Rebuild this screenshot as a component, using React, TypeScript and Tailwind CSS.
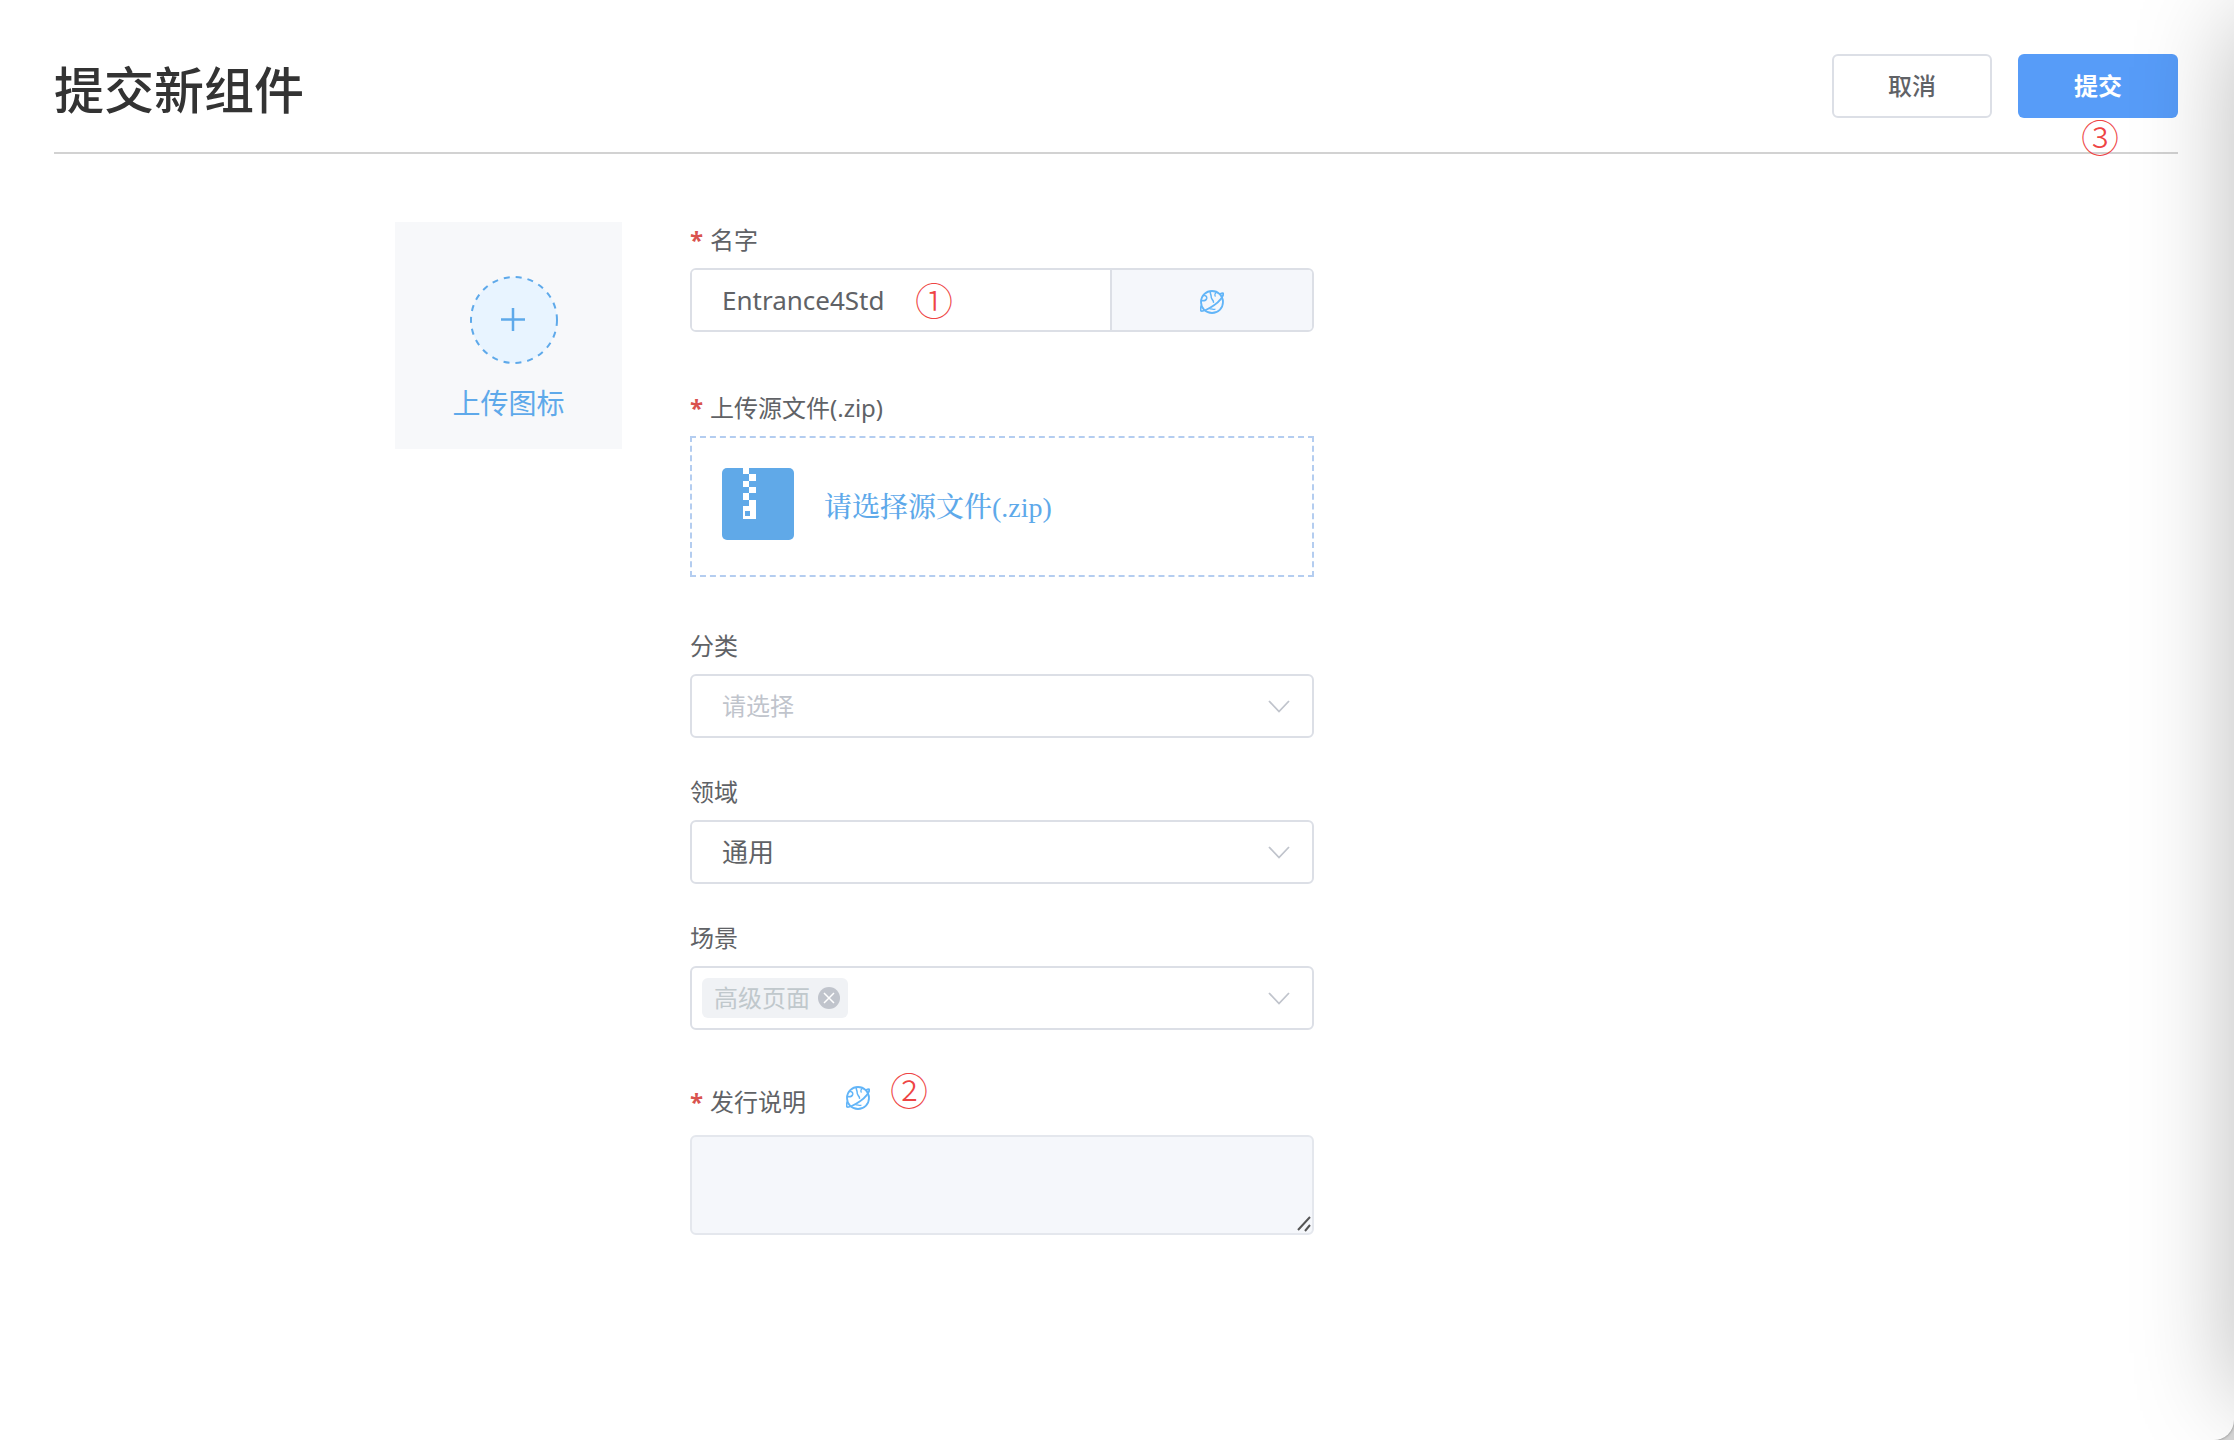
import { useState } from 'react';
import type { ReactNode } from 'react';

const labelClass = 'flex h-14 items-center gap-2 text-2xl text-[#606266]';

const selectClass =
  'h-16 w-full appearance-none rounded-md border-2 border-[#dcdfe6] bg-white px-[30px] outline-none';

const categories = ['基础组件', '业务组件'];
const domains = ['通用', '教育', '金融'];

function Star() {
  return <span className="w-3 font-['Open_Sans'] font-bold text-[#d9534f]">*</span>;
}

function Step({ children }: { children: ReactNode }) {
  return <span className="block text-[38px] leading-none font-light text-[#ee4444]">{children}</span>;
}

function GlobeIcon() {
  return (
    <svg viewBox="0 0 24 24" className="h-6 w-6" fill="none" stroke="#62b5f8" strokeLinecap="round" strokeLinejoin="round">
      {/* globe outline */}
      <circle cx="12" cy="12" r="11" strokeWidth="1.8" />
      {/* orbit ring */}
      <path d="M20 4c1.500-.8 3-1 3.300-.6C23.800 6 19 12 14 15.300 9 18.800 2.500 21.800 1 20.800c-.6-.6-.4-2.500.2-4.800" strokeWidth="1.800" />
      {/* land */}
      <path d="M10.500 1.500c-.8 1.800.6 3 .6 4.500 0 2 .2 2.600 1.200 3.600.8.800 1.200 1.500 1.200 2.700M4.500 5.500c1.800.2 2.500 1.500 2.200 3-.4 1.600-2 2.400-4.500 2.300" strokeWidth="1.500" />
      <path d="M16.500 2.200c-1.800 1.300-2 2.600-1.300 4M10 19c2-.4 3 .8 5 .2" strokeWidth="1.200" />
    </svg>
  );
}

function ZipIcon() {
  return (
    <svg viewBox="0 0 72 72" className="h-[72px] w-[72px]">
      <rect width="72" height="72" rx="5" fill="#60a9e8" />
      <g fill="#fff">
        <rect x="21" width="6" height="6" />
        <rect x="27" y="6" width="7" height="7" />
        <rect x="21" y="13" width="6" height="6" />
        <rect x="27" y="19" width="7" height="6" />
        <rect x="21" y="25" width="6" height="7" />
        <path fillRule="evenodd" d="M27 32h7v19H21V38h6zM23 43v5h5v-5z" />
      </g>
    </svg>
  );
}

function Chevron() {
  return (
    <svg viewBox="0 0 22 14" className="pointer-events-none absolute top-[25px] right-6 h-[14px] w-[22px]" fill="none" stroke="#c0c4cc" strokeWidth="1.800">
      <path d="M1 2l10 10.500L21 2" />
    </svg>
  );
}

export default function App() {
  const [name, setName] = useState('Entrance4Std');
  const [category, setCategory] = useState('');
  const [domain, setDomain] = useState('通用');
  const [scenes, setScenes] = useState(['高级页面']);
  const [notes, setNotes] = useState('');

  return (
    <div className="bg-[#d2d2d2]">
      <div className="relative min-h-screen overflow-hidden rounded-br-[20px] bg-white pt-[54px] pr-14 pl-[54px] font-['Noto_Sans','Noto_Sans_CJK_SC',sans-serif] text-[#606266] shadow-[0_0_3px_#777]">
        {/* Header */}
        <header className="flex h-[100px] items-start justify-between border-b-2 border-[#d2d2d2]">
          <h1 className="text-[50px] leading-[72px] font-medium text-[#333]">提交新组件</h1>
          <div className="flex gap-[26px]">
            <button type="button" className="h-16 w-40 rounded-md border-2 border-[#dcdfe6] bg-white text-2xl font-medium">
              取消
            </button>
            <div className="relative">
              <button type="submit" form="component-form" className="h-16 w-40 rounded-md bg-[#579cf8] text-2xl font-bold text-white">
                提交
              </button>
              <div className="absolute top-16 left-[63px]">
                <Step>③</Step>
              </div>
            </div>
          </div>
        </header>

        {/* Form */}
        <form id="component-form" className="flex pt-[58px] pl-[341px]" onSubmit={(e) => e.preventDefault()}>
          <button type="button" className="mt-[10px] flex h-[227px] w-[227px] flex-col items-center bg-[#f7f8fa] pt-[54px] text-[28px] text-[#5ea9ea]">
            <svg viewBox="0 0 88 88" className="ml-[11px] h-[88px] w-[88px]" fill="none" stroke="#5ea9ea" strokeWidth="2">
              <circle cx="44" cy="44" r="43" fill="#e8f4ff" strokeDasharray="6 6" />
              <path d="M43 32v23M31 43.500h24" strokeWidth="2.500" />
            </svg>
            <span className="mt-4 leading-[46px]">上传图标</span>
          </button>

          <div className="ml-[68px] w-[624px]">
            <label htmlFor="name" className={labelClass}>
              <Star />
              名字
            </label>
            <div className="relative flex h-16 overflow-hidden rounded-md border-2 border-[#dcdfe6]">
              <input
                id="name"
                value={name}
                onChange={(e) => setName(e.target.value)}
                className="min-w-0 flex-1 bg-white pl-[30px] text-[26px] outline-none"
              />
              <div className="absolute top-[11px] left-[223px]">
                <Step>①</Step>
              </div>
              <button type="button" aria-label="翻译名字" className="flex w-[202px] items-center justify-center border-l-2 border-[#dcdfe6] bg-[#f5f7fb] pt-1">
                <GlobeIcon />
              </button>
            </div>

            <div className="mt-12">
              <label htmlFor="source" className={labelClass}>
                <Star />
                上传源文件(.zip)
              </label>
              <button id="source" type="button" className="flex h-[141px] w-full items-start gap-[30px] border-2 border-dashed border-[#b4cdf0] px-[30px] pt-[30px] text-left">
                <ZipIcon />
                <span className="font-['Liberation_Serif','Noto_Serif_CJK_SC','Noto_Sans_CJK_SC',serif] text-[28px] leading-[80px] font-medium text-[#5ea9ea]">
                  请选择源文件(.zip)
                </span>
              </button>
            </div>

            <div className="mt-[41px]">
              <label htmlFor="category" className={labelClass}>
                分类
              </label>
              <div className="relative">
                <select id="category" value={category} onChange={(e) => setCategory(e.target.value)} className={`${selectClass} text-2xl text-[#c0c4cc]`}>
                  <option value="">请选择</option>
                  {categories.map((item) => (
                    <option key={item}>{item}</option>
                  ))}
                </select>
                <Chevron />
              </div>
            </div>

            <div className="mt-[26px]">
              <label htmlFor="domain" className={labelClass}>
                领域
              </label>
              <div className="relative">
                <select id="domain" value={domain} onChange={(e) => setDomain(e.target.value)} className={`${selectClass} text-[26px] text-[#606266]`}>
                  {domains.map((item) => (
                    <option key={item}>{item}</option>
                  ))}
                </select>
                <Chevron />
              </div>
            </div>

            <div className="mt-[26px]">
              <div id="scene-label" className={labelClass}>
                场景
              </div>
              <div className="relative">
                <div role="group" aria-labelledby="scene-label" className="flex h-16 items-center gap-2 rounded-md border-2 border-[#dcdfe6] pl-[10px]">
                  {scenes.map((scene) => (
                    <span key={scene} className="flex h-10 items-center gap-2 rounded-md bg-[#f0f2f5] px-2 pl-3 text-2xl text-[#c0c8cc]">
                      {scene}
                      <button type="button" aria-label="移除" onClick={() => setScenes(scenes.filter((s) => s !== scene))}>
                        <svg viewBox="0 0 22 22" className="h-[22px] w-[22px]">
                          <circle cx="11" cy="11" r="11" fill="#c0c4cc" />
                          <path d="M6 6l10 10M16 6L6 16" stroke="#fff" strokeWidth="1.500" />
                        </svg>
                      </button>
                    </span>
                  ))}
                </div>
                <Chevron />
              </div>
            </div>

            <div className="mt-[38px]">
              <div className="flex h-[67px] items-center">
                <label htmlFor="notes" className={labelClass}>
                  <Star />
                  发行说明
                </label>
                <button type="button" aria-label="翻译发行说明" className="mb-2 ml-10">
                  <GlobeIcon />
                </button>
                <div className="mb-6 ml-5">
                  <Step>②</Step>
                </div>
              </div>
              <div className="relative">
                <textarea
                  id="notes"
                  value={notes}
                  onChange={(e) => setNotes(e.target.value)}
                  className="block h-[100px] w-full resize-none rounded-md border-2 border-[#e4e7ed] bg-[#f5f7fb] px-[30px] py-3 text-2xl outline-none"
                />
                <svg viewBox="0 0 16 18" className="pointer-events-none absolute right-[2px] bottom-[2px] h-[18px] w-4" stroke="#555" strokeWidth="2">
                  <path d="M2 15L14 2M9 16l5-6" />
                </svg>
              </div>
            </div>
          </div>
        </form>

        {/* Window edge shade */}
        <div className="pointer-events-none absolute top-5 bottom-10 left-full w-40 shadow-[0_0_100px_rgba(0,0,0,0.27)]" />
      </div>
    </div>
  );
}
